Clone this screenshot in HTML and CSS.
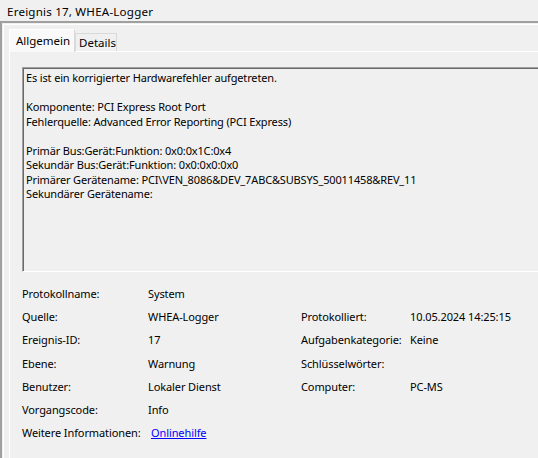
FILE: index.html
```html
<!DOCTYPE html>
<html lang="de">
<head>
<meta charset="utf-8">
<title>Ereignis 17, WHEA-Logger</title>
<link rel="stylesheet" href="styles.css">
</head>
<body>
<div class="window">
  <div class="titlebar">Ereignis 17, WHEA-Logger</div>
  <div class="frame">
    <div class="inner">
      <div class="tabs">
        <div class="tab selected">Allgemein</div>
        <div class="tab">Details</div>
      </div>
      <div class="panel">
        <div class="textbox">
          <div class="line">Es ist ein korrigierter Hardwarefehler aufgetreten.</div>
          <div class="line">&nbsp;</div>
          <div class="line">Komponente: PCI Express Root Port</div>
          <div class="line">Fehlerquelle: Advanced Error Reporting (PCI Express)</div>
          <div class="line">&nbsp;</div>
          <div class="line">Primär Bus:Gerät:Funktion: 0x0:0x1C:0x4</div>
          <div class="line">Sekundär Bus:Gerät:Funktion: 0x0:0x0:0x0</div>
          <div class="line">Primärer Gerätename: PCI\VEN_8086&amp;DEV_7ABC&amp;SUBSYS_50011458&amp;REV_11</div>
          <div class="line">Sekundärer Gerätename:</div>
        </div>
        <div class="props">
          <div class="lbl">Protokollname:</div><div class="val">System</div><div class="lbl"></div><div class="val"></div>
          <div class="lbl">Quelle:</div><div class="val">WHEA-Logger</div><div class="lbl">Protokolliert:</div><div class="val">10.05.2024 14:25:15</div>
          <div class="lbl">Ereignis-ID:</div><div class="val">17</div><div class="lbl">Aufgabenkategorie:</div><div class="val">Keine</div>
          <div class="lbl">Ebene:</div><div class="val">Warnung</div><div class="lbl">Schlüsselwörter:</div><div class="val"></div>
          <div class="lbl">Benutzer:</div><div class="val">Lokaler Dienst</div><div class="lbl">Computer:</div><div class="val">PC-MS</div>
          <div class="lbl">Vorgangscode:</div><div class="val">Info</div><div class="lbl"></div><div class="val"></div>
          <div class="lbl">Weitere Informationen:</div><div class="val"><a class="link" href="#">Onlinehilfe</a></div><div class="lbl"></div><div class="val"></div>
        </div>
      </div>
    </div>
  </div>
</div>
</body>
</html>
```
FILE: styles.css
```css
html, body {
  margin: 0;
  padding: 0;
  background: #f0f0f0;
  width: 538px;
  height: 458px;
  overflow: hidden;
}
body {
  font-family: "Noto Sans", "Open Sans", sans-serif;
  font-size: 11px;
  color: #000;
}
.window {
  display: flex;
  flex-direction: column;
  height: 458px;
}
.titlebar {
  box-sizing: border-box;
  height: 23px;
  line-height: 23px;
  padding-left: 7px;
  font-size: 11.6px;
  letter-spacing: 0.2px;
  border-bottom: 2px solid #a0a0a0;
}
.frame {
  flex: 1;
  border-left: 2px solid #a0a0a0;
  padding-top: 1px;
  display: flex;
}
.inner {
  flex: 1;
  border-top: 1px solid #ffffff;
  border-left: 1px solid #ffffff;
  margin-left: 1px;
  padding-left: 5px;
  padding-top: 4px;
  display: flex;
  flex-direction: column;
}
.tabs {
  display: flex;
  align-items: flex-end;
  height: 22px;
  position: relative;
  z-index: 1;
}
.tab {
  box-sizing: border-box;
  height: 18px;
  line-height: 18px;
  font-size: 11.5px;
  border: 1px solid #d9d9d9;
  border-bottom: none;
  background: #f0f0f0;
}
.tab.selected {
  height: 23px;
  line-height: 22px;
  padding-left: 6px;
  width: 66px;
  background: #f9f9f9;
  margin-bottom: -1px;
  border-left: 1px solid #ffffff;
  border-top: 1px solid #ffffff;
}
.tab:not(.selected) {
  width: 42px;
  padding-left: 3px;
}
.panel {
  flex: 1;
  border-top: 1px solid #ffffff;
  border-left: 1px solid #ffffff;
  padding: 15px 0 0 12px;
  background: #f0f0f0;
}
.textbox {
  box-sizing: border-box;
  height: 205px;
  border-top: 1px solid #a0a0a0;
  border-left: 1px solid #a0a0a0;
  box-shadow: inset 1px 1px 0 #696969;
  border-bottom: 1px solid #ffffff;
  border-right: 1px solid #ffffff;
  padding: 3px 0 0 3px;
  margin-right: -20px;
  white-space: nowrap;
  overflow: hidden;
  letter-spacing: -0.15px;
}
.line {
  line-height: 14.5px;
  height: 14.5px;
}
.props {
  display: grid;
  grid-template-columns: 126px 153px 109px 1fr;
  grid-auto-rows: 23.2px;
  margin-top: 10px;
  white-space: nowrap;
  letter-spacing: -0.1px;
}
.lbl, .val {
  line-height: 23px;
}
.link {
  color: #0000ff;
  text-decoration: underline;
  margin-left: 3px;
}
```
